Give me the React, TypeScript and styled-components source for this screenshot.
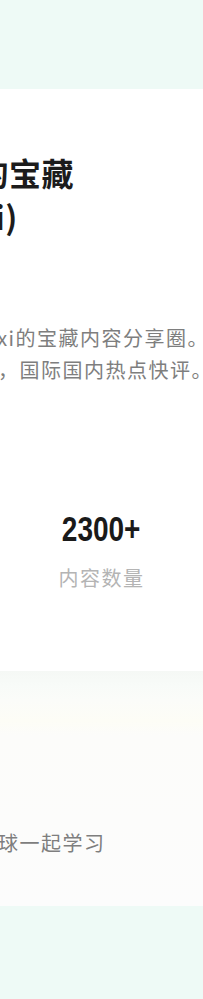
import React from "react";
import styled, { createGlobalStyle } from "styled-components";

const GlobalStyle = createGlobalStyle`
  html, body {
    margin: 0;
    padding: 0;
    background: #ffffff;
  }
  body {
    font-family: "Noto Sans CJK SC", "Noto Sans", sans-serif;
    overflow-x: hidden;
  }
`;

const Viewport = styled.div`
  width: 100%;
  overflow: hidden;
`;

// the page is wider than the window; only its right half is in view
const Sheet = styled.div`
  width: 406px;
  margin-left: -203px;
  display: flex;
  flex-direction: column;
`;

const Band = styled.div<{ $height: number }>`
  height: ${({ $height }) => $height}px;
  background: #eefaf6;
`;

const Intro = styled.section`
  background: #ffffff;
  padding: 61px 0 81px;
  display: flex;
  flex-direction: column;
`;

const Column = styled.div`
  padding-left: 7.5px;
  display: flex;
  flex-direction: column;
`;

const Title = styled.h1`
  margin: 0;
  padding-left: 9.5px;
  font-size: 32px;
  line-height: 44px;
  font-weight: 700;
  letter-spacing: 0.5px;
  color: #1c1c1c;
  white-space: nowrap;
`;

const Line = styled.span`
  display: block;
`;

const Description = styled.p`
  margin: 84px 0 0;
  font-size: 20px;
  line-height: 32px;
  letter-spacing: 1.5px;
  color: #7e7e7e;
  white-space: nowrap;
`;

const Stats = styled.div`
  margin-top: 123px;
  display: grid;
  grid-template-columns: 1fr 1fr;
`;

const Stat = styled.div`
  display: flex;
  flex-direction: column;
  align-items: center;
`;

const StatValue = styled.div`
  display: inline-block;
  font-family: "Liberation Sans", Arial, sans-serif;
  font-weight: 700;
  font-size: 35px;
  line-height: 40px;
  color: #1a1a1a;
  transform: scaleX(0.8);
`;

const StatLabel = styled.div`
  margin-top: 17px;
  font-size: 20px;
  line-height: 24px;
  letter-spacing: 1.5px;
  color: #b4b4b4;
`;

const Join = styled.section`
  padding: 156px 0 47px;
  background: linear-gradient(
    to bottom,
    #f5f8f5 0px,
    #f8fbf8 14px,
    #fbfcf9 30px,
    #fdfdf6 50px,
    #fcfcfa 64px,
    #fcfcfc 100%
  );
`;

const JoinText = styled.p`
  margin: 0;
  font-size: 20px;
  line-height: 32px;
  letter-spacing: 1.5px;
  color: #7e7e7e;
  white-space: nowrap;
`;

const stats = [
  { value: "500+", label: "星球成员" },
  { value: "2300+", label: "内容数量" },
];

export default function App() {
  return (
    <>
      <GlobalStyle />
      <Viewport>
        <Sheet>
          <Band $height={89} />
          <Intro>
            <Column>
              <Title>
                <Line>欢迎来到我的宝藏</Line>
                <Line>A星球(Guoxi)</Line>
              </Title>
              <Description>
                <Line>这里是一个关于Guoxi的宝藏内容分享圈。</Line>
                <Line>分享最新的学习资料，国际国内热点快评。</Line>
              </Description>
            </Column>
            <Stats>
              {stats.map((s) => (
                <Stat key={s.label}>
                  <StatValue>{s.value}</StatValue>
                  <StatLabel>{s.label}</StatLabel>
                </Stat>
              ))}
            </Stats>
          </Intro>
          <Join>
            <Column>
              <JoinText>欢迎大家加入知识星球一起学习</JoinText>
            </Column>
          </Join>
          <Band $height={120} />
        </Sheet>
      </Viewport>
    </>
  );
}
